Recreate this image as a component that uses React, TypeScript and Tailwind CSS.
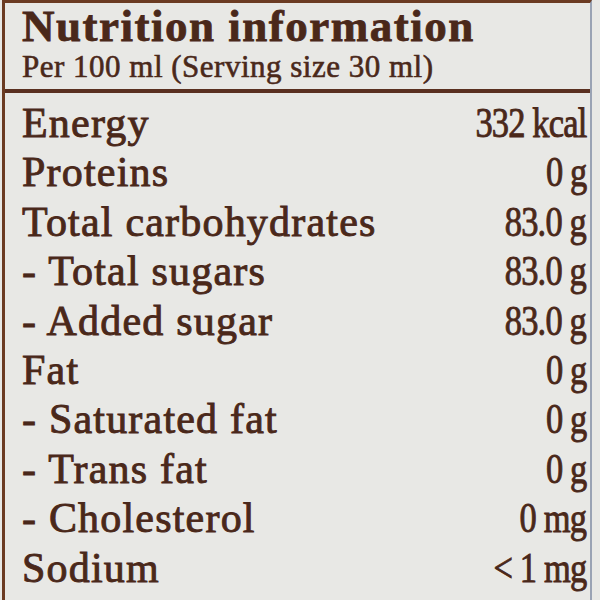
const rows = [
  { label: "Energy", value: "332 kcal" },
  { label: "Proteins", value: "0 g" },
  { label: "Total carbohydrates", value: "83.0 g" },
  { label: "- Total sugars", value: "83.0 g" },
  { label: "- Added sugar", value: "83.0 g" },
  { label: "Fat", value: "0 g" },
  { label: "- Saturated fat", value: "0 g" },
  { label: "- Trans fat", value: "0 g" },
  { label: "- Cholesterol", value: "0 mg" },
  { label: "Sodium", value: "< 1 mg" },
];

const App = () => {
  return (
    <div className="w-[600px] h-[600px] bg-[#e8e8e5] overflow-hidden font-['Liberation_Serif',serif] text-[#4a281a]">
      <div className="ml-[2px] mr-[8px] h-full border-l-[3px] border-t-[3px] border-r-2 border-l-[#6b3b22] border-t-[#6b3b22] border-r-[#9aa3b4]">
        {/* Header */}
        <div className="pl-[17px] pb-[4px]">
          <h1 className="font-bold text-[45px] leading-[46px] tracking-[1.5px] [-webkit-text-stroke:0.8px_#4a281a]">
            Nutrition information
          </h1>
          <p className="text-[31px] leading-[36px] tracking-[0.5px] [-webkit-text-stroke:0.6px_#4a281a]">
            Per 100 ml (Serving size 30 ml)
          </p>
        </div>
        <div className="h-[4px] bg-[#5a3020]" />
        {/* Rows */}
        <div className="pt-[6px]">
          {rows.map((r) => (
            <div
              key={r.label}
              className="flex items-center justify-between h-[49.4px] pl-[17px] pr-[4px] text-[42px] leading-[49.4px] [-webkit-text-stroke:0.9px_#4a281a]"
            >
              <span className="tracking-[1.2px]">{r.label}</span>
              <span className="inline-block scale-x-[0.82] origin-right whitespace-nowrap tracking-[-1px]">
                {r.value}
              </span>
            </div>
          ))}
        </div>
      </div>
    </div>
  );
};

export default App;
